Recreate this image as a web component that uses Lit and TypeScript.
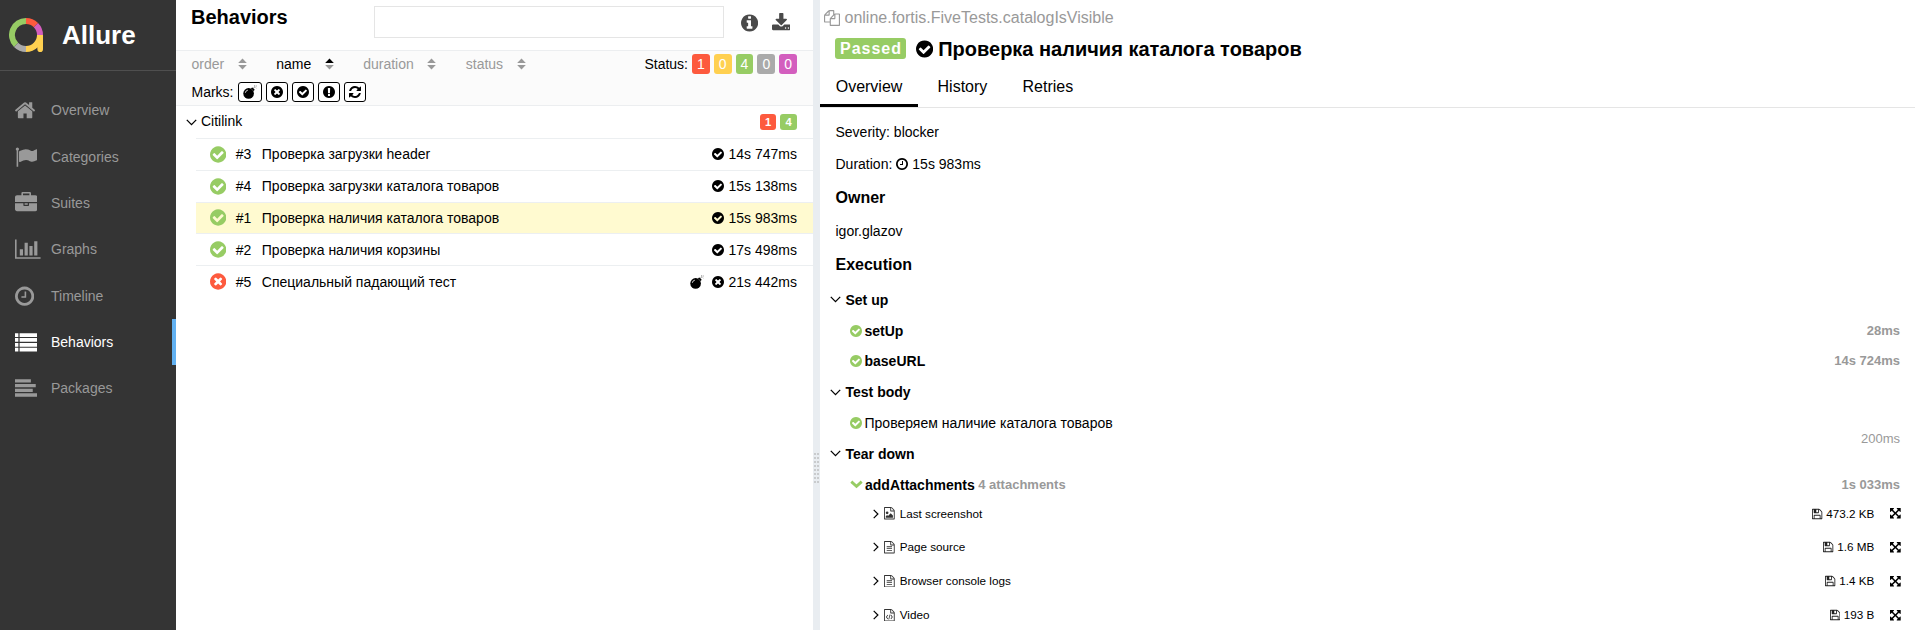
import { LitElement, html, css, svg } from "lit";
import { customElement } from "lit/decorators.js";

const DISC =
  "q0 209-103 385.5t-279.5 279.5-385.5 103-385.5-103-279.5-279.5-103-385.5 103-385.5 279.5-279.5 385.5-103 385.5 103 279.5 279.5 103 385.5z";
const FILE =
  "M1596 380q28 28 48 76t20 88v1152q0 40-28 68t-68 28h-1344q-40 0-68-28t-28-68v-1600q0-40 28-68t68-28h896q40 0 88 20t76 48zm-444-244v376h376q-10-29-22-41l-313-313q-12-12-41-22zm384 1528v-1024h-416q-40 0-68-28t-28-68v-416h-768v1536h1280z";

type Glyph = { x: number; w: number; d: string };

const GLYPHS: Record<string, Glyph> = {
  check: {
    x: 128,
    w: 1536,
    d: "M1412 734q0-28-18-46l-91-90q-19-19-45-19t-45 19l-408 407-226-226q-19-19-45-19t-45 19l-91 90q-18 18-18 46 0 27 18 45l362 362q19 19 45 19 27 0 46-19l543-543q18-18 18-45zm252 162" + DISC,
  },
  times: {
    x: 128,
    w: 1536,
    d: "M1277 1122q0-26-19-45l-181-181 181-181q19-19 19-45 0-27-19-46l-90-90q-19-19-46-19-26 0-45 19l-181 181-181-181q-19-19-45-19-27 0-46 19l-90 90q-19 19-19 46 0 26 19 45l181 181-181 181q-19 19-19 45 0 27 19 46l90 90q19 19 46 19 26 0 45-19l181-181 181 181q19 19 45 19 27 0 46-19l90-90q19-19 19-46zm387-226" + DISC,
  },
  exclamation: {
    x: 128,
    w: 1536,
    d: "M896 128q209 0 385.5 103t279.5 279.5 103 385.5-103 385.5-279.5 279.5-385.5 103-385.5-103-279.5-279.5-103-385.5 103-385.5 279.5-279.5 385.5-103zm128 1247v-190q0-14-9-23.5t-22-9.5h-192q-13 0-23 10t-10 23v190q0 13 10 23t23 10h192q13 0 22-9.5t9-23.5zm-2-344l18-621q0-12-10-18-10-8-24-8h-220q-14 0-24 8-10 6-10 18l17 621q0 10 10 17.5t24 7.5h185q14 0 23.5-7.5t10.5-17.5z",
  },
  info: {
    x: 128,
    w: 1536,
    d: "M1152 1376v-160q0-14-9-23t-23-9h-96v-512q0-14-9-23t-23-9h-320q-14 0-23 9t-9 23v160q0 14 9 23t23 9h96v320h-96q-14 0-23 9t-9 23v160q0 14 9 23t23 9h448q14 0 23-9t9-23zm-128-896v-160q0-14-9-23t-23-9h-192q-14 0-23 9t-9 23v160q0 14 9 23t23 9h192q14 0 23-9t9-23zm640 416" + DISC,
  },
  clock: {
    x: 128,
    w: 1536,
    d: "M1024 544v448q0 14-9 23t-23 9h-320q-14 0-23-9t-9-23v-64q0-14 9-23t23-9h224v-352q0-14 9-23t23-9h64q14 0 23 9t9 23zm416 352q0-148-73-273t-198-198-273-73-273 73-198 198-73 273 73 273 198 198 273 73 273-73 198-198 73-273zm224 0" + DISC,
  },
  home: {
    x: 90,
    w: 1612,
    d: "M1472 992v480q0 26-19 45t-45 19h-384v-384h-256v384h-384q-26 0-45-19t-19-45v-480q0-1 .5-3t.5-3l575-474 575 474q1 2 1 6zm223-69l-62 74q-8 9-21 11h-3q-13 0-21-7l-692-577-692 577q-12 8-24 7-13-2-21-11l-62-74q-8-10-7-23.5t11-21.5l719-599q32-26 76-26t76 26l244 204v-195q0-14 9-23t23-9h192q14 0 23 9t9 23v408l219 182q10 8 11 21.5t-7 23.5z",
  },
  flag: {
    x: 0,
    w: 1792,
    d: "M320 256q0 72-64 110v1266q0 13-9.5 22.5t-22.5 9.5h-64q-13 0-22.5-9.5t-9.5-22.5v-1266q-64-38-64-110 0-53 37.5-90.5t90.5-37.5 90.5 37.5 37.5 90.5zm1472 64v763q0 25-12.5 38.5t-39.5 27.5q-215 116-369 116-61 0-123.5-22t-108.5-48-115.5-48-142.5-22q-192 0-464 146-17 9-33 9-26 0-45-19t-19-45v-742q0-32 31-55 21-14 79-43 236-120 421-120 107 0 200 29t219 88q38 19 88 19 54 0 117.5-21t110-47 88-47 54.5-21q26 0 45 19t19 45z",
  },
  briefcase: {
    x: 0,
    w: 1792,
    d: "M640 256h512v-128h-512v128zm1152 640v480q0 66-47 113t-113 47h-1472q-66 0-113-47t-47-113v-480h672v160q0 26 19 45t45 19h320q26 0 45-19t19-45v-160h672zm-768 0v128h-256v-128h256zm768-480v384h-1792v-384q0-66 47-113t113-47h352v-160q0-40 28-68t68-28h576q40 0 68 28t28 68v160h352q66 0 113 47t47 113z",
  },
  chart: {
    x: 0,
    w: 2048,
    d: "M640 896v512h-256v-512h256zm384-512v1024h-256v-1024h256zm1024 1152v128h-2048v-1536h128v1408h1920zm-640-896v768h-256v-768h256zm384-384v1152h-256v-1152h256z",
  },
  list: {
    x: 0,
    w: 1792,
    d: "M0 180h270v300h-270zM370 180h1422v300h-1422zM0 570h270v300h-270zM370 570h1422v300h-1422zM0 960h270v300h-270zM370 960h1422v300h-1422zM0 1350h270v290h-270zM370 1350h1422v290h-1422z",
  },
  align: {
    x: 0,
    w: 1792,
    d: "M0 190h1270v260h-1270zM0 560h1660v270h-1660zM0 940h1420v260h-1420zM0 1310h1792v270h-1792z",
  },
  download: {
    x: 64,
    w: 1664,
    d: "M1344 1344q0-26-19-45t-45-19-45 19-19 45 19 45 45 19 45-19 19-45zm256 0q0-26-19-45t-45-19-45 19-19 45 19 45 45 19 45-19 19-45zm128-224v320q0 40-28 68t-68 28h-1472q-40 0-68-28t-28-68v-320q0-40 28-68t68-28h465l135 136q58 56 136 56t136-56l136-136h464q40 0 68 28t28 68zm-325-569q17 41-14 70l-448 448q-18 19-45 19t-45-19l-448-448q-31-29-14-70 17-39 59-39h256v-448q0-26 19-45t45-19h256q26 0 45 19t19 45v448h256q42 0 59 39z",
  },
  refresh: {
    x: 128,
    w: 1536,
    d: "M1639 1056q0 5-1 7-64 268-268 434.5t-478 166.5q-146 0-282.5-55t-243.5-157l-129 129q-19 19-45 19t-45-19-19-45v-448q0-26 19-45t45-19h448q26 0 45 19t19 45-19 45l-137 137q71 66 161 102t187 36q134 0 250-65t186-179q11-17 53-117 8-23 30-23h192q13 0 22.5 9.5t9.5 22.5zm25-800v448q0 26-19 45t-45 19h-448q-26 0-45-19t-19-45 19-45l138-138q-148-137-349-137-134 0-250 65t-186 179q-11 17-53 117-8 23-30 23h-199q-13 0-22.5-9.5t-9.5-22.5v-7q65-268 270-434.5t480-166.5q146 0 284 55.5t245 156.5l130-129q19-19 45-19t45 19 19 45z",
  },
  floppy: {
    x: 128,
    w: 1536,
    d: "M512 1536h768v-384h-768v384zm896 0h128v-896q0-14-10-38.5t-20-34.5l-281-281q-10-10-34-20t-39-10v416q0 40-28 68t-68 28h-576q-40 0-68-28t-28-68v-416h-128v1280h128v-416q0-40 28-68t68-28h832q40 0 68 28t28 68v416zm-384-928v-320q0-13-9.5-22.5t-22.5-9.5h-192q-13 0-22.5 9.5t-9.5 22.5v320q0 13 9.5 22.5t22.5 9.5h192q13 0 22.5-9.5t9.5-22.5zm640 32v928q0 40-28 68t-68 28h-1344q-40 0-68-28t-28-68v-1344q0-40 28-68t68-28h928q40 0 88 20t76 48l280 280q28 28 48 76t20 88z",
  },
  expand: {
    x: 128,
    w: 1536,
    d: "M1411 541l-355 355 355 355 144-144q29-31 70-14 39 17 39 59v448q0 26-19 45t-45 19h-448q-42 0-59-40-17-39 14-69l144-144-355-355-355 355 144 144q31 30 14 69-17 40-59 40h-448q-26 0-45-19t-19-45v-448q0-42 40-59 39-17 69 14l144 144 355-355-355-355-144 144q-19 19-45 19-12 0-24-5-40-17-40-59v-448q0-26 19-45t45-19h448q42 0 59 40 17 39-14 69l-144 144 355 355 355-355-144-144q-31-30-14-69 17-40 59-40h448q26 0 45 19t19 45v448q0 42-39 59-13 5-25 5-26 0-45-19z",
  },
  copy: {
    x: 0,
    w: 1792,
    d: "M1696 384q40 0 68 28t28 68v1216q0 40-28 68t-68 28h-960q-40 0-68-28t-28-68v-288h-544q-40 0-68-28t-28-68v-672q0-40 20-88t48-76l408-408q28-28 76-48t88-20h416q40 0 68 28t28 68v328q68-40 128-40h416zm-544 213l-299 299h299v-299zm-640-384l-299 299h299v-299zm196 647l316-316v-416h-384v416q0 40-28 68t-68 28h-416v640h512v-256q0-40 20-88t48-76zm956 804v-1152h-384v416q0 40-28 68t-68 28h-416v640h896z",
  },
  fileText: {
    x: 128,
    w: 1536,
    d: FILE + "M512 768h768v128h-768zM512 1024h768v128h-768zM512 1280h768v128h-768z",
  },
  fileImage: {
    x: 128,
    w: 1536,
    d: FILE + "M1408 1216v320h-1024v-192l192-192 128 128 384-384zm-832-192q-80 0-136-56t-56-136 56-136 136-56 136 56 56 136-56 136-136 56z",
  },
  fileCode: {
    x: 128,
    w: 1536,
    d: FILE + "M640 820l90 70-190 250 190 250-90 70-240-320zM1152 820l-90 70 190 250-190 250 90 70 240-320zM940 780l110 20-190 720-110-20z",
  },
};

function icon(name: string, size: number, cls = "") {
  const g = GLYPHS[name];
  return html`<svg class="icon ${cls}" width=${((g.w / 1792) * size).toFixed(2)} height=${size} viewBox="${g.x} 0 ${g.w} 1792">
    <path fill="currentColor" d=${g.d}></path>
  </svg>`;
}

const bomb = html`<svg class="icon" width="14" height="14" viewBox="0 0 14 14">
  <circle cx="5.6" cy="8.4" r="5.3" fill="currentColor" />
  <path d="M7.8 3.2 10.8 6.2 11.6 4.6 9.4 2.4z" fill="currentColor" />
  <path d="M10.3 3.2 12 1.7M11 .8h.9M13.2.5v1M12.6 2.4l.7.6" stroke="currentColor" stroke-width=".7" fill="none" opacity=".65" />
  <path d="M2.3 7.8a3.2 3.2 0 0 1 2.6-2.7" stroke="#fff" stroke-width=".8" fill="none" />
</svg>`;

const chevronDown = html`<svg class="icon" width="11" height="7" viewBox="0 0 11 7">
  <path d="M.8.9 5.5 5.6 10.2.9" fill="none" stroke="currentColor" stroke-width="1.3" />
</svg>`;
const chevronRight = html`<svg class="icon" width="6" height="10" viewBox="0 0 6 10">
  <path d="M.7.8 4.9 5 .7 9.2" fill="none" stroke="currentColor" stroke-width="1.2" />
</svg>`;
const chevronBold = html`<svg class="icon passed" width="13" height="9" viewBox="0 0 13 9">
  <path d="M1.3 1.6 6.5 6.4 11.7 1.6" fill="none" stroke="currentColor" stroke-width="2.8" />
</svg>`;

const shared = css`
  * { box-sizing: border-box; }
  .icon { display: block; flex: none; }
  .passed { color: #97cc64; }
  .failed { color: #fd5a3e; }
  .row { display: flex; align-items: center; white-space: nowrap; }
  .grow { flex: 1; }
`;

@customElement("side-nav")
export class SideNav extends LitElement {
  static styles = [
    shared,
    css`
      :host { display: block; width: 176px; height: 100%; background: #343434; color: #999; }
      .brand { height: 71px; padding-left: 9px; border-bottom: 1px solid #4f4f4f; color: #fff; font: bold 26px/58px "Liberation Sans", Arial, sans-serif; }
      .brand span { margin-left: 19px; }
      .logo { display: block; }
      .menu { padding-top: 16px; }
      .item { height: 46.33px; padding: 0.5px 0 0 15px; }
      .pic { width: 36px; }
      .active { color: #fff; border-right: 4px solid #62b1f1; }
    `,
  ];
  items = [
    ["home", "Overview"],
    ["flag", "Categories"],
    ["briefcase", "Suites"],
    ["chart", "Graphs"],
    ["clock", "Timeline"],
    ["list", "Behaviors"],
    ["align", "Packages"],
  ];
  render() {
    const arc = (d: string, c: string) => svg`<path d=${d} stroke=${c} stroke-width="6" fill="none" />`;
    return html`
      <div class="brand row">
        <svg class="logo" width="34" height="34" viewBox="0 0 34 34">
          ${arc("M17 3A14 14 0 0 0 7.1 26.9", "#97cc64")}
          ${arc("M7.1 26.9A14 14 0 0 0 17 31", "#aaa")}
          ${arc("M17 3A14 14 0 0 1 26.9 7.1", "#fd5a3e")}
          ${arc("M26.9 7.1A14 14 0 0 1 31 17", "#d35ebe")}
          ${arc("M17 31A14 14 0 0 0 31 17", "#ffd050")}
          <path d="M28 17h6v14.2a2.8 2.8 0 0 1-5.6 0z" fill="#ffd050" />
        </svg>
        <span>Allure</span>
      </div>
      <div class="menu">
        ${this.items.map(
          ([i, t]) => html`<div class="item row ${t === "Behaviors" ? "active" : ""}">
            <div class="pic">${icon(i, 22.4)}</div>${t}
          </div>`
        )}
      </div>
    `;
  }
}

@customElement("behaviors-tree")
export class BehaviorsTree extends LitElement {
  static styles = [
    shared,
    css`
      :host { display: block; width: 637px; height: 100%; }
      .head { height: 50px; padding: 0 22px 0 15px; align-items: flex-start; }
      .title { width: 183px; font: bold 20px/34px "Liberation Sans", Arial, sans-serif; }
      .search { width: 350px; height: 32px; margin: 6px 17px 0 0; padding: 0 8px; border: 1px solid #e5e5e5; background: #fff; font: inherit; outline: none; }
      .tool { margin-top: 13px; margin-right: 13.5px; color: #4a4a4a; }
      .tool:last-child { margin-right: 0; }
      .bar { height: 56px; padding: 2px 16px 0 15.5px; background: #fbfbfb; border: solid #eceef0; border-width: 1px 0; }
      .line { height: 22px; }
      .line + .line { margin-top: 7px; height: 20px; }
      .sorter { color: #999; gap: 13.7px; margin-right: 29.3px; }
      .sorter.on { color: #000; }
      .badges { gap: 4px; margin-left: 4px; }
      .badge { height: 20px; padding: 0 5px; border-radius: 3px; color: #fff; line-height: 20px; }
      .small .badge { height: 16px; padding: 0 5.2px; font: bold 11.2px/16px "Liberation Sans", Arial, sans-serif; }
      .b1 { background: #fd5a3e; }
      .b2 { background: #ffd050; }
      .b3 { background: #97cc64; }
      .b4 { background: #aaa; }
      .b5 { background: #d35ebe; }
      .marks { gap: 4px; margin-left: 4px; }
      .mark { height: 20px; padding: 0 4px; border: 1px solid #000; border-radius: 3px; display: flex; align-items: center; background: #fff; }
      .group { height: 32px; padding: 0 16px 0 10px; gap: 4px; }
      .group .text { padding-bottom: 2px; }
      .leaf { height: 31.8px; margin-left: 20px; padding: 0 16px 0 14px; border-top: 1px solid #eceff1; }
      .leaf.sel { background: #fffad0; }
      .num { width: 26px; margin-left: 9.5px; }
      .leaf .times { margin-right: 5px; gap: 8px; }
    `,
  ];
  leaves = [
    ["check", "#3", "Проверка загрузки header", "14s 747ms"],
    ["check", "#4", "Проверка загрузки каталога товаров", "15s 138ms"],
    ["check", "#1", "Проверка наличия каталога товаров", "15s 983ms"],
    ["check", "#2", "Проверка наличия корзины", "17s 498ms"],
    ["times", "#5", "Специальный падающий тест", "21s 442ms"],
  ];
  sorter(t: string) {
    const on = t === "name";
    return html`<div class="sorter row ${on ? "on" : ""}">
      <span>${t}</span>
      <svg class="icon" width="9" height="12" viewBox="0 0 9 12">
        <path d="M4.5.4 8.8 5H.2z" fill="currentColor" />
        <path d="M4.5 11.6 8.8 7H.2z" fill="#999" />
      </svg>
    </div>`;
  }
  render() {
    return html`
      <div class="head row">
        <div class="title">Behaviors</div>
        <input class="search" />
        <div class="tool">${icon("info", 20)}</div>
        <div class="tool">${icon("download", 20)}</div>
      </div>
      <div class="bar">
        <div class="line row">
          ${["order", "name", "duration", "status"].map((t) => this.sorter(t))}
          <div class="grow"></div>
          Status:
          <div class="badges row">
            ${["1", "0", "4", "0", "0"].map((n, i) => html`<span class="badge b${i + 1}">${n}</span>`)}
          </div>
        </div>
        <div class="line row">
          Marks:
          <div class="marks row">
            <div class="mark">${bomb}</div>
            ${["times", "check", "exclamation", "refresh"].map((n) => html`<div class="mark">${icon(n, 14)}</div>`)}
          </div>
        </div>
      </div>
      <div class="group row">
        ${chevronDown}<span class="text">Citilink</span>
        <div class="grow"></div>
        <div class="badges small row"><span class="badge b1">1</span><span class="badge b3">4</span></div>
      </div>
      ${this.leaves.map(
        ([s, n, t, d]) => html`<div class="leaf row ${n === "#1" ? "sel" : ""}">
          ${icon(s, 19, s === "check" ? "passed" : "failed")}
          <span class="num">${n}</span><span>${t}</span>
          <div class="grow"></div>
          <div class="times row">${s === "times" ? bomb : ""}${icon(s, 14)}</div>
          <span>${d}</span>
        </div>`
      )}
    `;
  }
}

@customElement("test-result")
export class TestResult extends LitElement {
  static styles = [
    shared,
    css`
      :host { display: block; flex: 1; height: 100%; min-width: 0; }
      .path { height: 35px; padding-left: 4px; gap: 4.5px; font-size: 16px; color: #999; }
      .name { height: 29px; padding: 0 0 2px 15px; font-weight: bold; font-size: 20px; }
      .label { height: 21px; padding: 0 4px 0 5px; margin-right: 10px; border-radius: 3px; background: #97cc64; color: #fff; font-size: 16px; line-height: 21px; letter-spacing: 1px; }
      .name span { margin-left: 5px; }
      .tabs { display: flex; gap: 3.5px; height: 44px; border-bottom: 1px solid #e5e5e5; font-size: 16px; }
      .tab { height: 43px; padding: 0 16px 0 15.7px; line-height: 45px; }
      .tab.on { border-bottom: 3px solid #000; }
      .body { padding: 8px 15px 0 15.5px; }
      .meta { height: 32px; }
      .meta .icon { margin: 0 4px; }
      h3 { margin: 0; font-size: 16px; height: 35px; line-height: 35px; }
      .steps { padding-top: 2.3px; }
      .stage { height: 30.83px; gap: 5px; margin-left: -6px; font-weight: bold; }
      .step { height: 30.83px; padding-left: 14px; gap: 3px; font-weight: bold; }
      .plain { font-weight: normal; }
      .opened { height: 27.5px; padding-top: 3px; gap: 2.5px; }
      .time { color: #999; font-size: 13px; }
      .plain .time { margin-top: 32px; }
      .count { color: #999; font-size: 13px; margin-left: 1px; }
      .file { height: 33.75px; padding-left: 37px; margin-right: -1px; font-size: 11.7px; }
      .file .type { margin: 0 5px 0 5.5px; color: #333; }
      .file .expand { margin-left: 16px; }
      .file .disk { margin-right: 3.5px; color: #222; }
    `,
  ];
  step(t: string, d: string, plain = false) {
    return html`<div class="step row ${plain ? "plain" : ""}">
      ${icon("check", 14, "passed")}<span>${t}</span><div class="grow"></div><span class="time">${d}</span>
    </div>`;
  }
  file(i: string, t: string, size: string) {
    return html`<div class="file row">
      ${chevronRight}${icon(i, 12.5, "type")}<span>${t}</span><div class="grow"></div>
      ${icon("floppy", 12, "disk")}<span>${size}</span>${icon("expand", 12.5, "expand")}
    </div>`;
  }
  stage(t: string) {
    return html`<div class="stage row">${chevronDown}<span>${t}</span></div>`;
  }
  render() {
    return html`
      <div class="path row">${icon("copy", 16)}<span>online.fortis.FiveTests.catalogIsVisible</span></div>
      <div class="name row">
        <div class="label">Passed</div>${icon("check", 20)}<span>Проверка наличия каталога товаров</span>
      </div>
      <div class="tabs">
        <div class="tab on">Overview</div>
        <div class="tab">History</div>
        <div class="tab">Retries</div>
      </div>
      <div class="body">
        <div class="meta row">Severity: blocker</div>
        <div class="meta row">Duration: ${icon("clock", 14)} 15s 983ms</div>
        <h3>Owner</h3>
        <div class="meta row">igor.glazov</div>
        <h3>Execution</h3>
        <div class="steps">
          ${this.stage("Set up")} ${this.step("setUp", "28ms")} ${this.step("baseURL", "14s 724ms")}
          ${this.stage("Test body")} ${this.step("Проверяем наличие каталога товаров", "200ms", true)}
          ${this.stage("Tear down")}
          <div class="step opened row">
            ${chevronBold}<span>addAttachments</span><span class="count">4 attachments</span>
            <div class="grow"></div><span class="time">1s 033ms</span>
          </div>
          ${this.file("fileImage", "Last screenshot", "473.2 KB")}
          ${this.file("fileText", "Page source", "1.6 MB")}
          ${this.file("fileText", "Browser console logs", "1.4 KB")}
          ${this.file("fileCode", "Video", "193 B")}
        </div>
      </div>
    `;
  }
}

@customElement("app-root")
export class AppRoot extends LitElement {
  static styles = css`
    :host { display: flex; height: 630px; overflow: hidden; background: #fff; color: #000; font: 14px/16px "Liberation Sans", Arial, sans-serif; }
    side-nav, behaviors-tree { flex: none; }
    .gutter { box-sizing: border-box; flex: none; width: 7px; padding: 453px 1px 0; background: #e9edf1; }
    .grip { display: grid; grid-template-columns: 2px 2px; gap: 2px 1px; }
    .grip i { height: 2px; background: #c9cbcd; }
  `;
  render() {
    return html`
      <side-nav></side-nav>
      <behaviors-tree></behaviors-tree>
      <div class="gutter"><div class="grip">${Array.from({ length: 16 }, () => html`<i></i>`)}</div></div>
      <test-result></test-result>
    `;
  }
}
